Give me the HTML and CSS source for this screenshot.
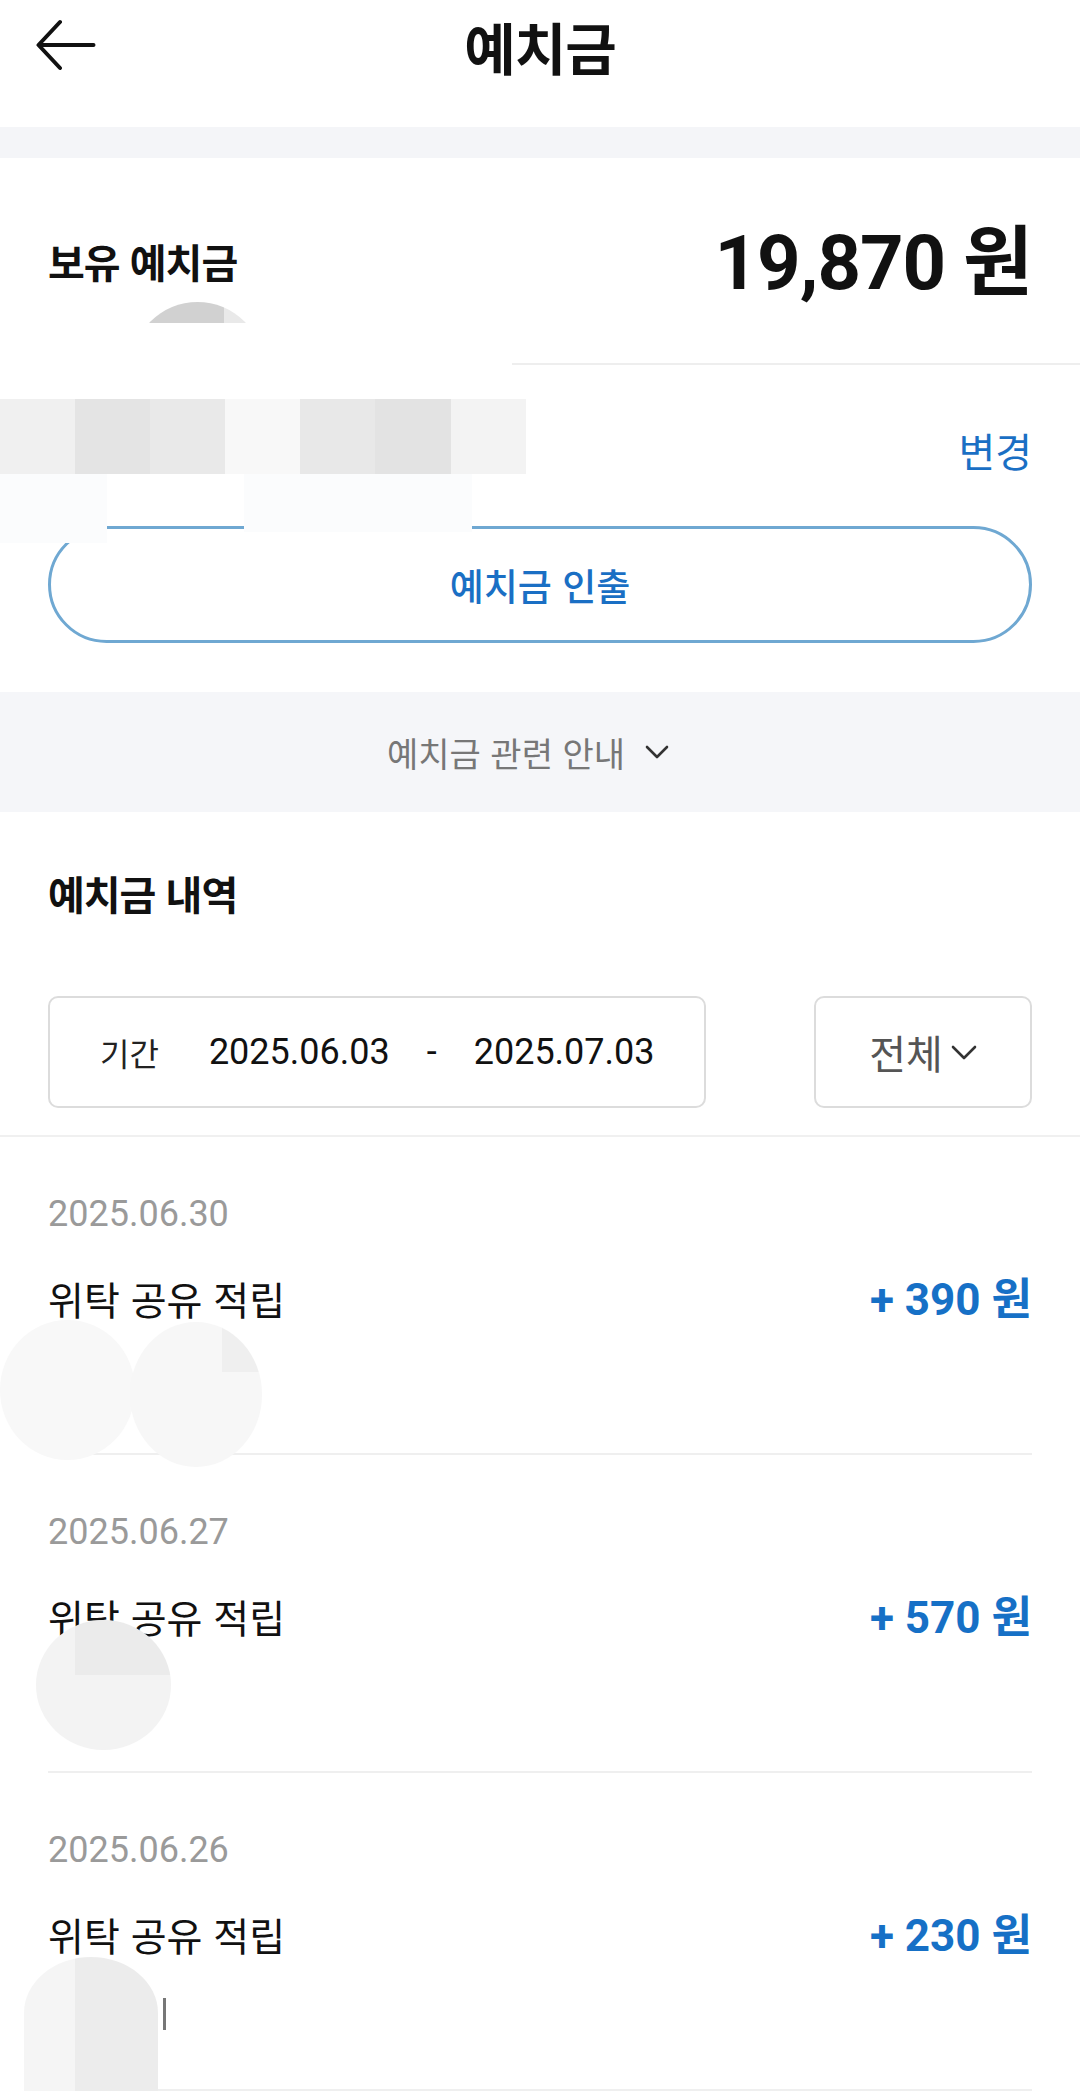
FILE: index.html
```html
<!DOCTYPE html>
<html lang="ko">
	<head>
		<meta charset="utf-8">
		<meta name="viewport" content="width=device-width, initial-scale=1.0">
		<title>예치금</title>
		<link rel="stylesheet" href="styles.css">
	</head>
	<body>
		<header class="topbar">
			<button class="back" aria-label="뒤로">
				<svg width="60" height="56" viewBox="0 0 60 56">
					<path d="M57.5 27H3 M24 4L2.5 27L24 50" fill="none" stroke="#111" stroke-width="4" stroke-linecap="round" stroke-linejoin="round"/>
				</svg>
			</button>
			<h1>예치금</h1>
		</header>
		<div class="band"></div>

		<section class="balance">
			<div class="balance-row">
				<span class="balance-label">보유 예치금</span>
				<span class="balance-amount">19,870 <span class="won">원</span></span>
			</div>
			<div class="account-row">
				<a class="change">변경</a>
			</div>
			<button class="withdraw">예치금 인출</button>

			<!-- redacted account info -->
			<span class="mask-dot"></span>
			<span class="mask-white"></span>
			<span class="mask-pixels"></span>
			<span class="mask-fade mask-fade-left"></span>
			<span class="mask-fade mask-fade-mid"></span>
		</section>

		<div class="notice">
			<span>예치금 관련 안내</span>
			<svg width="24" height="14" viewBox="0 0 24 14">
				<path d="M2 2L12 12L22 2" fill="none" stroke="#333" stroke-width="2.6" stroke-linecap="round" stroke-linejoin="round"/>
			</svg>
		</div>

		<section class="history">
			<h2>예치금 내역</h2>
			<div class="filters">
				<div class="period">
					<span class="period-label">기간</span>
					<span class="date">2025.06.03</span>
					<span class="dash">-</span>
					<span class="date">2025.07.03</span>
				</div>
				<div class="type">
					<span>전체</span>
					<svg width="26" height="15" viewBox="0 0 26 15">
						<path d="M2 2L13 13L24 2" fill="none" stroke="#333" stroke-width="2.6" stroke-linecap="round" stroke-linejoin="round"/>
					</svg>
				</div>
			</div>
		</section>

		<ul class="entries">
			<li class="entry">
				<div class="entry-date">2025.06.30</div>
				<div class="entry-main">
					<span class="entry-title">위탁 공유 적립</span>
					<span class="entry-amount">+ 390 <span class="won">원</span></span>
				</div>
				<span class="blob blob-1a"></span>
				<span class="blob blob-1b"></span>
			</li>
			<li class="entry">
				<div class="entry-date">2025.06.27</div>
				<div class="entry-main">
					<span class="entry-title">위탁 공유 적립</span>
					<span class="entry-amount">+ 570 <span class="won">원</span></span>
				</div>
				<span class="blob blob-2"></span>
			</li>
			<li class="entry">
				<div class="entry-date">2025.06.26</div>
				<div class="entry-main">
					<span class="entry-title">위탁 공유 적립</span>
					<span class="entry-amount">+ 230 <span class="won">원</span></span>
				</div>
				<span class="blob blob-3"></span>
				<span class="stroke-3"></span>
			</li>
		</ul>
	</body>
</html>
```

FILE: styles.css
```css
* {
	box-sizing: border-box;
}

body {
	margin: 0;
	width: 1080px;
	background: #fff;
	color: #111;
	font-family: 'Roboto', 'Noto Sans CJK KR', sans-serif;
}

/* header */
.topbar {
	display: grid;
	grid-template-columns: 1fr auto 1fr;
	align-items: center;
	height: 127px;
	padding-bottom: 36px;
}

.back {
	justify-self: start;
	margin-left: 36px;
	padding: 0;
	border: 0;
	background: none;
	display: flex;
}

.topbar h1 {
	margin: 0;
	font-family: 'Noto Sans CJK KR', sans-serif;
	font-size: 56px;
	font-weight: 700;
	letter-spacing: -1px;
}

.band {
	height: 31px;
	background: #f4f5f8;
}

/* balance card */
.balance {
	position: relative;
	padding-bottom: 49px;
	overflow: hidden;
}

.balance-row {
	display: flex;
	justify-content: space-between;
	align-items: center;
	height: 207px;
	padding: 0 48px;
	border-bottom: 2px solid #eeeeee;
}

.balance-label {
	font-family: 'Noto Sans CJK KR', sans-serif;
	font-size: 40px;
	font-weight: 700;
	letter-spacing: -1px;
}

.balance-amount {
	margin-bottom: 10px;
	font-size: 76px;
	font-weight: 700;
	letter-spacing: -1px;
}

.won {
	font-family: 'Noto Sans CJK KR', sans-serif;
}

.account-row {
	display: flex;
	justify-content: flex-end;
	align-items: center;
	height: 161px;
	padding: 8px 48px 0;
}

.change {
	font-family: 'Noto Sans CJK KR', sans-serif;
	font-size: 40px;
	color: #1a6fc4;
}

.withdraw {
	display: block;
	width: calc(100% - 96px);
	height: 117px;
	margin: 0 48px;
	border: 3px solid #6fa8d2;
	border-radius: 60px;
	background: #fff;
	color: #1a6fc4;
	font-family: 'Noto Sans CJK KR', sans-serif;
	font-size: 37px;
	font-weight: 500;
}

/* redaction over the account info */
.mask-dot,
.mask-white,
.mask-pixels,
.mask-fade {
	position: absolute;
}

.mask-dot {
	left: 131px;
	top: 144px;
	width: 133px;
	height: 133px;
	border-radius: 50%;
	background: linear-gradient(to right, #c9c9c9 0 12%, #d1d1d1 12% 70%, #e9e9e9 70%);
}

.mask-white {
	left: 0;
	top: 165px;
	width: 512px;
	height: 76px;
	background: #fff;
}

.mask-pixels {
	left: 0;
	top: 241px;
	width: 526px;
	height: 75px;
	background: linear-gradient(to right,
		#f0f0f0 0 75px,
		#e4e4e4 75px 150px,
		#e9e9e9 150px 225px,
		#f8f8f8 225px 300px,
		#e8e8e8 300px 375px,
		#e3e3e3 375px 451px,
		#f3f3f3 451px);
}

.mask-fade {
	top: 316px;
	background: #fbfcfd;
}

.mask-fade-left {
	left: 0;
	width: 107px;
	height: 69px;
}

.mask-fade-mid {
	left: 244px;
	width: 228px;
	height: 58px;
}

/* notice band */
.notice {
	display: flex;
	justify-content: center;
	align-items: center;
	gap: 20px;
	height: 120px;
	padding-right: 24px;
	background: #f5f6f9;
	color: #777;
	font-family: 'Noto Sans CJK KR', sans-serif;
	font-size: 34px;
}

/* history */
.history {
	padding: 0 48px 27px;
	border-bottom: 2px solid #f0f0f0;
}

.history h2 {
	display: flex;
	align-items: center;
	height: 162px;
	margin: 0;
	font-family: 'Noto Sans CJK KR', sans-serif;
	font-size: 40px;
	font-weight: 700;
	letter-spacing: -1px;
}

.filters {
	display: flex;
	justify-content: space-between;
	margin-top: 22px;
}

.period,
.type {
	display: flex;
	align-items: center;
	height: 112px;
	border: 2px solid #dcdcdc;
	border-radius: 10px;
}

.period {
	width: 658px;
	padding-left: 50px;
}

.period-label {
	margin-right: 50px;
	font-family: 'Noto Sans CJK KR', sans-serif;
	font-size: 32px;
	color: #222;
}

.date {
	font-size: 36px;
	color: #111;
}

.dash {
	margin: 0 37px 0 37px;
	font-size: 36px;
}

.type {
	width: 218px;
	justify-content: center;
	gap: 8px;
	font-family: 'Noto Sans CJK KR', sans-serif;
	font-size: 40px;
	color: #555;
}

/* entries */
.entries {
	list-style: none;
	margin: 0;
	padding: 0 48px;
}

.entry {
	position: relative;
	height: 318px;
	padding-top: 55px;
	border-bottom: 2px solid #efefef;
}

.entry-date {
	font-size: 36px;
	line-height: 44px;
	color: #9a9a9a;
}

.entry-main {
	display: flex;
	justify-content: space-between;
	align-items: center;
	margin-top: 36px;
	line-height: 48px;
}

.entry-title {
	font-family: 'Noto Sans CJK KR', sans-serif;
	font-size: 39px;
}

.entry-amount {
	font-size: 44px;
	font-weight: 700;
	color: #1670c6;
}

.blob,
.stroke-3 {
	position: absolute;
}

.blob {
	border-radius: 50%;
}

.blob-1a {
	left: -48px;
	top: 183px;
	width: 135px;
	height: 140px;
	background: #f8f8f8;
}

.blob-1b {
	left: 82px;
	top: 185px;
	width: 132px;
	height: 145px;
	background: linear-gradient(#efefef, #efefef) right top / 40px 50px no-repeat, #f7f7f7;
}

.blob-2 {
	left: -12px;
	top: 165px;
	width: 135px;
	height: 130px;
	background: linear-gradient(#ebebeb, #ebebeb) right top / 96px 55px no-repeat, #f3f3f3;
}

.blob-3 {
	left: -24px;
	top: 184px;
	width: 134px;
	height: 140px;
	border-radius: 50% 50% 0 0 / 40% 40% 0 0;
	background: linear-gradient(to right, #f5f5f5 0 38%, #ececec 38%);
}

.stroke-3 {
	left: 115px;
	top: 225px;
	width: 3px;
	height: 32px;
	background: #777;
}
```
